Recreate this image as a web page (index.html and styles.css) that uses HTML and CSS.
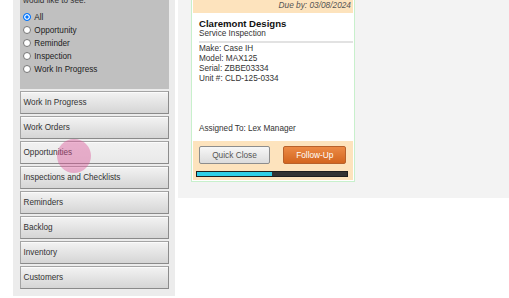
FILE: index.html
```html
<!DOCTYPE html>
<html>
<head>
<meta charset="utf-8">
<link rel="stylesheet" href="styles.css">
</head>
<body>
<div class="layout">
  <aside class="sidebar">
    <div class="filter">
      <p class="intro">Please select the type of item you<br>would like to see:</p>
      <label class="opt"><input class="radio" type="radio" name="t" checked><span>All</span></label>
      <label class="opt"><input class="radio" type="radio" name="t"><span>Opportunity</span></label>
      <label class="opt"><input class="radio" type="radio" name="t"><span>Reminder</span></label>
      <label class="opt"><input class="radio" type="radio" name="t"><span>Inspection</span></label>
      <label class="opt"><input class="radio" type="radio" name="t"><span>Work In Progress</span></label>
    </div>
    <nav class="menu">
      <div class="menu-btn">Work In Progress</div>
      <div class="menu-btn">Work Orders</div>
      <div class="menu-btn hover">Opportunities</div>
      <div class="menu-btn">Inspections and Checklists</div>
      <div class="menu-btn">Reminders</div>
      <div class="menu-btn">Backlog</div>
      <div class="menu-btn">Inventory</div>
      <div class="menu-btn">Customers</div>
    </nav>
  </aside>
  <main class="board">
    <div class="card">
      <div class="card-head">Due by: 03/08/2024</div>
      <div class="card-body">
        <div class="title">Claremont Designs</div>
        <div class="sub">Service Inspection</div>
        <div class="rule"></div>
        <div class="details">
          <div>Make: Case IH</div>
          <div>Model: MAX125</div>
          <div>Serial: ZBBE03334</div>
          <div>Unit #: CLD-125-0334</div>
        </div>
        <div class="assigned">Assigned To: Lex Manager</div>
      </div>
      <div class="card-foot">
        <div class="actions">
          <button class="btn btn-close">Quick Close</button>
          <button class="btn btn-follow">Follow-Up</button>
        </div>
        <div class="progress"><div class="fill" style="width:50%"></div></div>
      </div>
    </div>
  </main>
</div>
<span class="tap"></span>
</body>
</html>
```
FILE: styles.css
```css
html, body {
  margin: 0;
  padding: 0;
  background: #fff;
  overflow: hidden;
}
body {
  font-family: "Liberation Sans", Arial, sans-serif;
  font-size: 8.2px;
  color: #222;
  position: relative;
}
.layout {
  display: flex;
  align-items: flex-start;
}
.sidebar {
  margin: -23px 0 0 13px;
  width: 162px;
  box-sizing: border-box;
  padding: 7px 6px 7px 7px;
  background: #ececec;
  flex: none;
}
.filter {
  background: #c0c0c0;
  padding: 2px 3px 13px 3px;
}
.intro {
  margin: 0 0 4.8px;
  line-height: 10px;
  color: #333;
}
.opt {
  display: flex;
  align-items: center;
  height: 13px;
  gap: 3px;
  color: #222;
}
.radio {
  appearance: none;
  -webkit-appearance: none;
  width: 8px;
  height: 8px;
  margin: 0 0 0 0.3px;
  border: 1px solid #767676;
  border-radius: 50%;
  background: #fff;
  box-sizing: border-box;
  flex: none;
}
.radio:checked {
  border-color: #0075ff;
  background: #0075ff;
  box-shadow: inset 0 0 0 1.3px #fff;
}
.menu {
  display: flex;
  flex-direction: column;
  gap: 2px;
  margin-top: 2.6px;
}
.menu-btn {
  height: 22.9px;
  box-sizing: border-box;
  border: 1px solid #a4a4a4;
  border-right-color: #8c8c8c;
  border-bottom-color: #8a8a8a;
  background: linear-gradient(#f3f3f3, #d5d5d5);
  box-shadow: inset 0 1px 0 #fbfbfb;
  padding-left: 2.5px;
  display: flex;
  align-items: center;
  color: #333;
}
.menu-btn.hover {
  background: linear-gradient(#f1f1f1, #e9e9e9);
}
.board {
  flex: 1;
  margin: -10px 0 0 3px;
  padding: 5.5px 0 16px 13px;
  background: #f3f3f3;
}
.card {
  width: 164px;
  box-sizing: border-box;
  border: 1px solid #c8f0cc;
  padding: 1px;
  background: #fff;
}
.card-head {
  background: #fde3bd;
  height: 15px;
  box-sizing: border-box;
  padding: 2px 2px 0 0;
  line-height: 11px;
  text-align: right;
  font-style: italic;
  font-size: 8.3px;
  color: #555;
}
.card-body {
  padding: 5px 0 6.5px 6px;
}
.title {
  font-weight: bold;
  font-size: 9.6px;
  line-height: 11px;
  color: #111;
}
.sub {
  line-height: 10px;
  color: #333;
}
.rule {
  height: 2px;
  background: #e2e2e2;
  margin-top: 2px;
}
.details {
  margin-top: 1.4px;
  line-height: 9.9px;
  color: #333;
}
.assigned {
  margin-top: 40.7px;
  line-height: 10px;
  color: #333;
}
.card-foot {
  background: #fde3bd;
  padding: 5.3px 4.7px 3.3px 3px;
}
.actions {
  display: flex;
  justify-content: space-between;
  padding: 0 2px 0 3px;
}
.btn {
  height: 18.3px;
  box-sizing: border-box;
  border-radius: 2px;
  font-family: inherit;
  font-size: 8.3px;
  padding: 0;
  margin: 0;
}
.btn-close {
  width: 71px;
  border: 1px solid #8d8d8d;
  background: linear-gradient(#f7f7f7, #dcdcdc);
  color: #555;
}
.btn-follow {
  width: 63px;
  border: 1px solid #b8612b;
  background: linear-gradient(#ec8a45, #d3651f);
  color: #fff;
}
.progress {
  margin-top: 6.7px;
  height: 5.7px;
  box-sizing: border-box;
  border: 1px solid #1e1e1e;
  background: #333;
}
.fill {
  height: 100%;
  background: #2fcfe8;
}
.tap {
  position: absolute;
  left: 57px;
  top: 139px;
  width: 34px;
  height: 34px;
  border-radius: 50%;
  background: rgba(220, 80, 150, 0.42);
}
```
